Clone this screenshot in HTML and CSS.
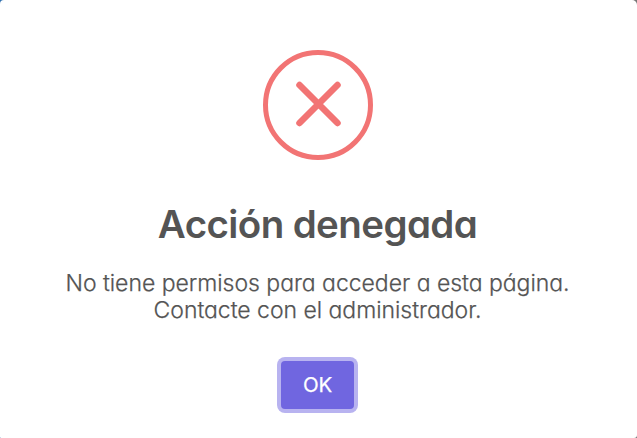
FILE: index.html
```html
<!DOCTYPE html>
<html lang="es">
<head>
<meta charset="utf-8">
<title>Acción denegada</title>
<link rel="stylesheet" href="styles.css">
</head>
<body>
<main class="popup" role="dialog">
  <svg class="icon" viewBox="0 0 110 110" aria-hidden="true">
    <circle cx="55" cy="55" r="52.5"/>
    <path class="mark" d="M36.5 35 74.5 73M74.5 35 36.5 73"/>
  </svg>
  <h2 class="title"><span>Acción denegada</span></h2>
  <p class="text"><span>No tiene permisos para acceder a esta página.</span><br><span>Contacte con el administrador.</span></p>
  <button class="confirm" type="button">OK</button>
</main>
</body>
</html>
```

FILE: styles.css
```css
body {
  margin: 0;
  background: linear-gradient(90deg, #2f6fae 0 50%, #777 50%);
  font-family: Inter, "Liberation Sans", sans-serif;
  font-feature-settings: "cv11";
}
.popup {
  box-sizing: border-box;
  width: 637px;
  height: 438px;
  padding: 50px 1px 0 0;
  display: flex;
  flex-direction: column;
  align-items: center;
  background: #fff;
  border-radius: 4px 5px 3px 1px;
  color: #545454;
}
.icon {
  width: 110px;
  height: 110px;
  fill: none;
  stroke: #f27474;
  stroke-width: 5;
}
.mark {
  stroke-width: 6.5;
  stroke-linecap: round;
}
.title {
  margin: 41px 1px 0 0;
  font-size: 38.5px;
  line-height: 46px;
  font-weight: 600;
  letter-spacing: -0.6px;
}
.text {
  margin: 23px 1px 0 0;
  font-size: 23px;
  line-height: 27px;
  font-weight: 300;
  letter-spacing: -0.03px;
  -webkit-text-stroke: 0.25px #545454;
  text-align: center;
}
.confirm {
  margin: 37px 1px 0 0;
  width: 73px;
  height: 48px;
  border: 0;
  border-radius: 4px;
  background: #7066e0;
  color: #fff;
  font: 400 20.5px/48px Inter, sans-serif;
  letter-spacing: -0.3px;
  -webkit-text-stroke: 0.25px #fff;
  padding: 0;
  box-shadow: 0 0 0 4px #b8b3f0;
}
```
